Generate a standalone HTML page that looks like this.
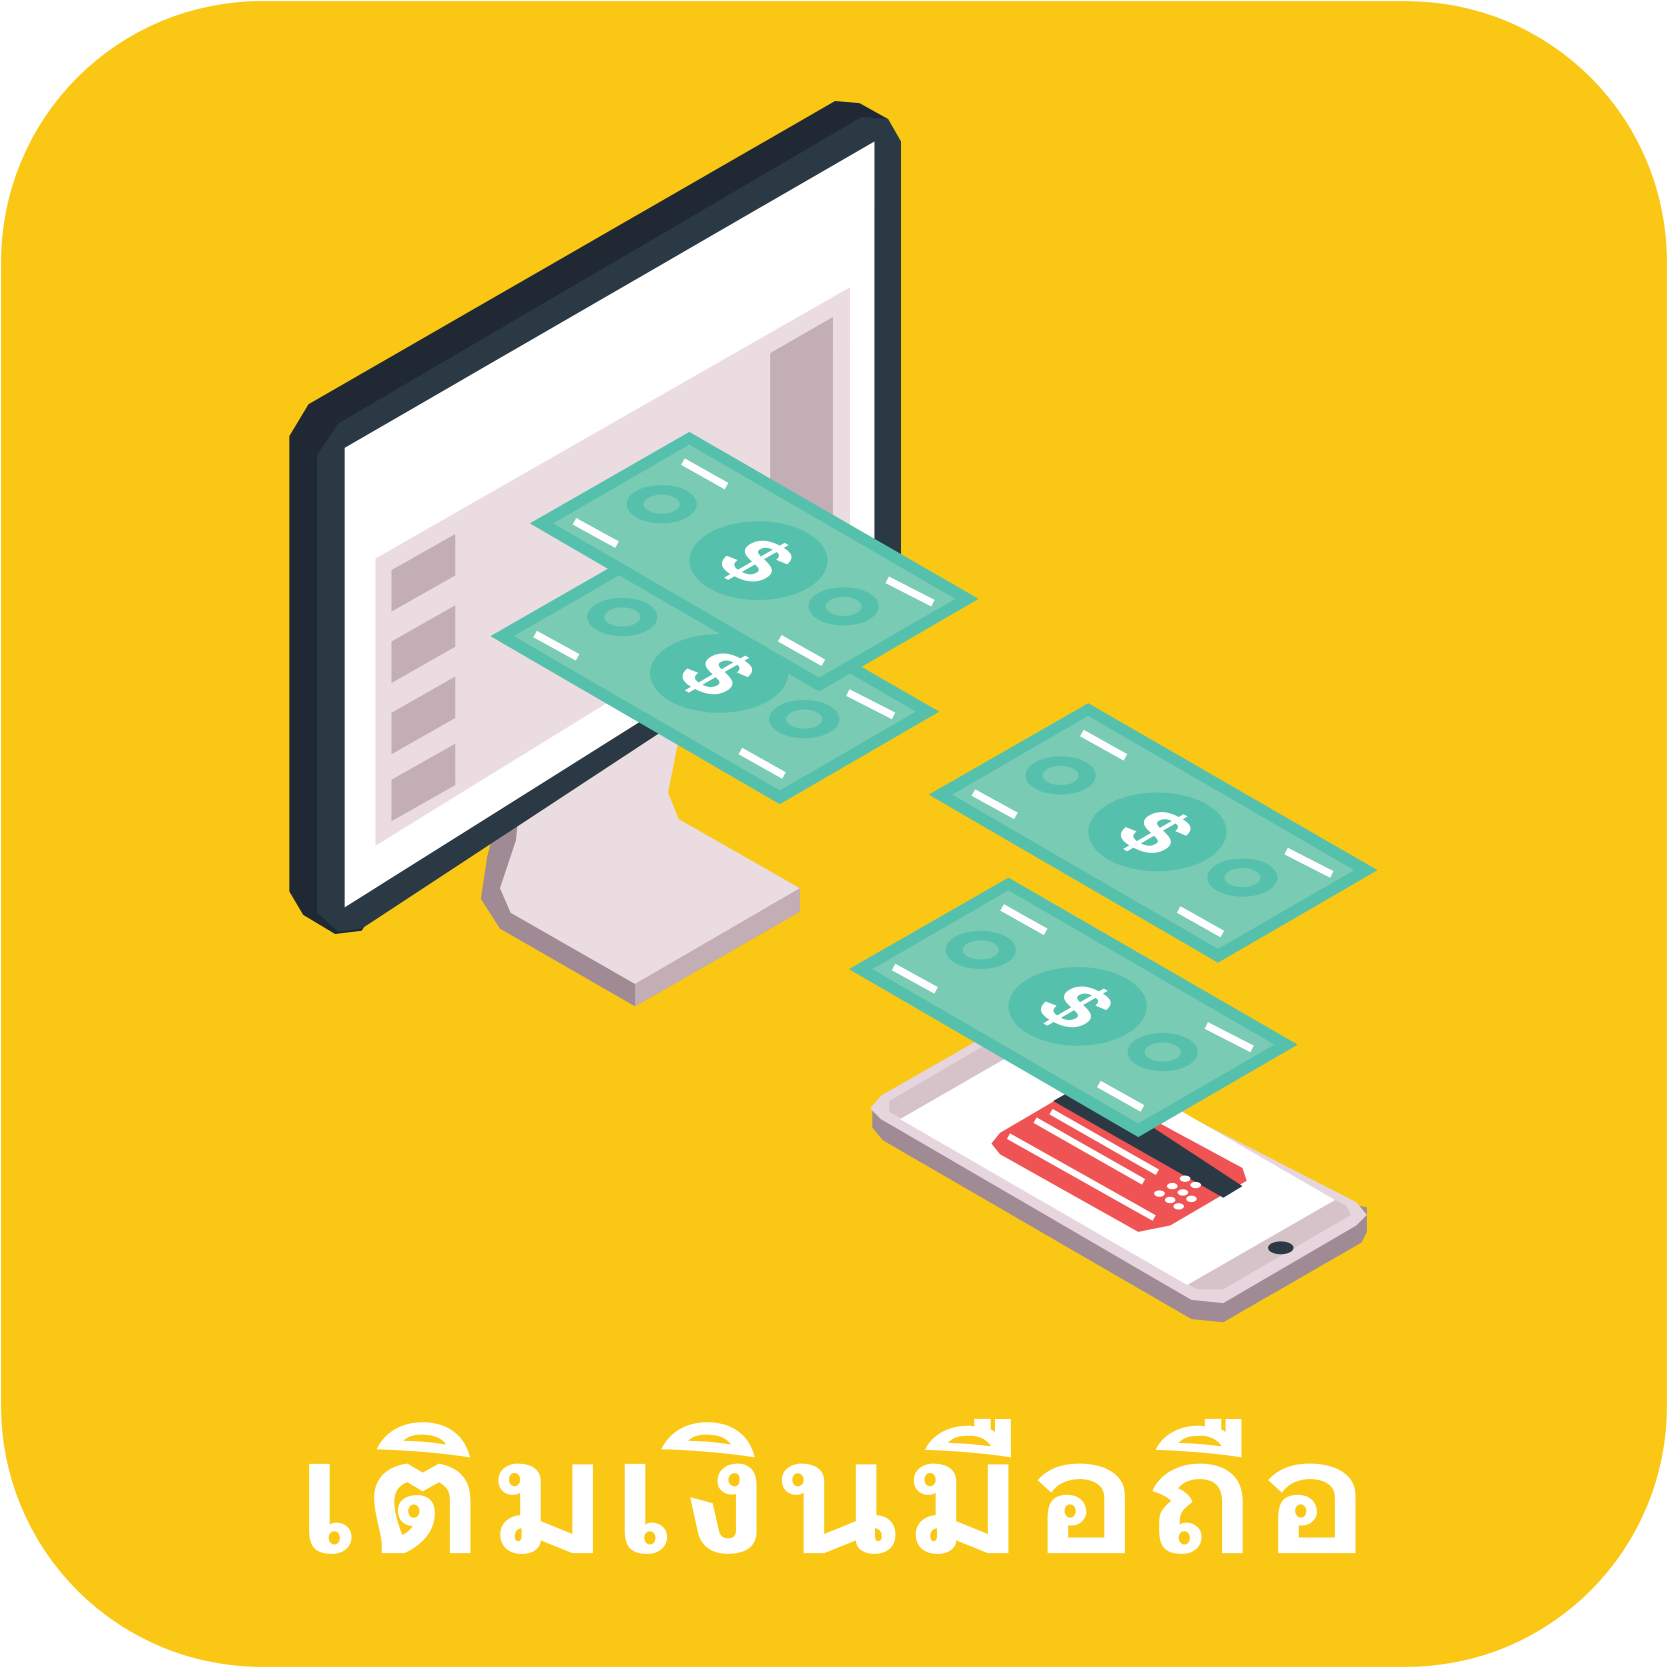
<!DOCTYPE html>
<html><head><meta charset="utf-8"><style>html,body{margin:0;padding:0;background:#fff}svg{display:block}</style></head><body>
<svg width="1668" height="1668" viewBox="0 0 1568 1568" xmlns="http://www.w3.org/2000/svg">
<defs>
<g id="bill">
<polygon points="498,492 648,406 920,563 770,650" fill="#55c1ac"/>
<polygon points="520,492 648,418 898,563 770,637" fill="#7acbb4"/>
<ellipse cx="713" cy="527" rx="65" ry="37" fill="#55c1ac"/>
<ellipse cx="622" cy="474" rx="33" ry="18" fill="#55c1ac"/>
<ellipse cx="622" cy="474" rx="17" ry="9" fill="#7acbb4"/>
<ellipse cx="793" cy="570" rx="33" ry="18" fill="#55c1ac"/>
<ellipse cx="793" cy="570" rx="17" ry="9" fill="#7acbb4"/>
<g stroke="#fff" stroke-width="7">
<line x1="540" y1="490" x2="580" y2="512"/>
<line x1="642" y1="434" x2="683" y2="457"/>
<line x1="834" y1="545" x2="877" y2="567"/>
<line x1="733" y1="600" x2="774" y2="623"/>
</g>
<text x="0" y="28" transform="translate(712,527) matrix(0.87,0.5,-0.87,0.5,0,0)" font-family="Liberation Sans,sans-serif" font-weight="bold" font-size="80" fill="#fff" text-anchor="middle">$</text>
</g>
</defs>
<rect x="1" y="1" width="1566" height="1566" rx="245" fill="#fac814"/>
<polygon points="470,760 640,660 625,745 638,772 752,835 752,857 597,946 470,873 452,845 458,805" fill="#a08b95"/>
<polygon points="490,740 645,660 628,745 638,770 752,835 597,925 480,858 470,835 485,790" fill="#ebdce1"/>
<polygon points="597,925 752,835 752,857 597,946" fill="#c4aeb5"/>
<polygon points="272,410 290,380 785,95 808,97 835,112 340,875 315,878 285,860 272,838" fill="#1f2833"/>
<polygon points="298,428 318,398 810,110 835,112 847,133 847,540 340,873 318,876 298,858" fill="#2b3945"/>
<polygon points="324,421 822,133 822,540 324,853" fill="#fff"/>
<polygon points="353,525 799,270 799,520 353,795" fill="#ebdce1"/>
<polygon points="724,332 783,298 783,500 724,534" fill="#c4aeb5"/>
<g fill="#c4aeb5">
<polygon points="368,536 428,502 428,541 368,575"/>
<polygon points="368,603 428,569 428,608 368,642"/>
<polygon points="368,670 428,636 428,675 368,709"/>
<polygon points="368,733 428,699 428,738 368,772"/>
</g>
<use href="#bill" transform="translate(-37,106)"/>
<use href="#bill"/>
<polygon points="820,1040 820,1060 830,1072 1120,1240 1150,1243 1280,1168 1285,1158 1285,1135" fill="#a08b95"/>
<polygon points="828,1030 947,962 1275,1130 1285,1142 1275,1152 1150,1225 1120,1222 828,1052 818,1042" fill="#e6d5dc"/>
<polygon points="836,1035 947,970 1265,1133 1270,1142 1150,1212 1125,1212 836,1045" fill="#d5c3c9"/>
<polygon points="846,1052 985,972 1255,1128 1116,1208" fill="#fff"/>
<ellipse cx="1204" cy="1173" rx="12" ry="6" fill="#2b3945"/>
<polygon points="940,1065 1020,1018 1168,1098 1172,1110 1100,1152 1070,1158 940,1085 932,1075" fill="#ef5353"/>
<polygon points="990,1035 1020,1018 1168,1115 1150,1126" fill="#2b3945"/>
<g stroke="#fff" stroke-width="6"><line x1="948" y1="1068" x2="1085" y2="1145"/><line x1="973" y1="1053" x2="1075" y2="1111"/><line x1="988" y1="1045" x2="1088" y2="1102"/></g>
<g fill="#fff">
<ellipse cx="1090" cy="1122" rx="5" ry="3"/><ellipse cx="1102" cy="1115" rx="5" ry="3"/><ellipse cx="1114" cy="1108" rx="5" ry="3"/>
<ellipse cx="1100" cy="1128" rx="5" ry="3"/><ellipse cx="1112" cy="1121" rx="5" ry="3"/><ellipse cx="1124" cy="1114" rx="5" ry="3"/>
<ellipse cx="1108" cy="1134" rx="5" ry="3"/><ellipse cx="1120" cy="1127" rx="5" ry="3"/>
</g>
<use href="#bill" transform="translate(375,255)"/>
<use href="#bill" transform="translate(300,419)"/>
<text x="278" y="1460" textLength="1012" lengthAdjust="spacingAndGlyphs" font-family="Loma,'Noto Sans Thai','Garuda','Liberation Sans',sans-serif" font-weight="bold" font-size="150" fill="#fff">เติมเงินมือถือ</text>
</svg>
</body></html>
